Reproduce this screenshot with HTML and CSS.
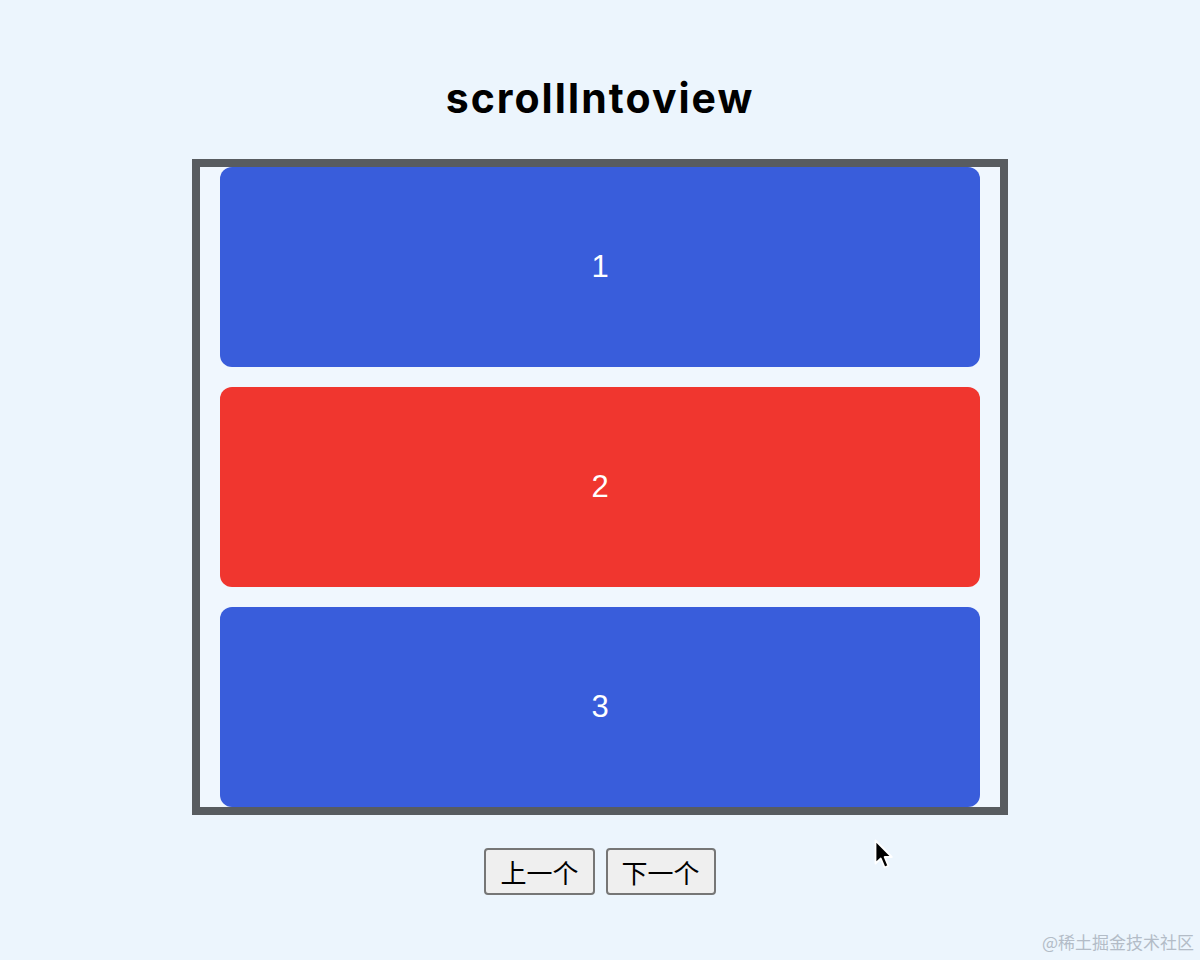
FILE: index.html
```html
<!DOCTYPE html>
<html>
  <head>
    <meta charset="utf-8" />
    <title>scrollIntoview</title>
    <link rel="stylesheet" href="styles.css">
  </head>
  <body>
    <h1 class="title">scrollIntoview</h1>
    <div class="viewport">
      <div class="list">
        <div class="item item--blue">1</div>
        <div class="item item--red">2</div>
        <div class="item item--blue">3</div>
      </div>
    </div>
    <div class="controls">
      <button class="btn">上一个</button>
      <button class="btn">下一个</button>
    </div>
    <svg class="cursor" width="24" height="32" viewBox="0 0 24 32">
      <path d="M1.5 1.5 L1.5 24.5 L6.8 19.5 L10.6 28.5 L14.4 26.8 L10.6 18 L17.8 18 Z"
        fill="#000" stroke="#fff" stroke-width="1.8" stroke-linejoin="round" />
    </svg>
    <div class="watermark">@稀土掘金技术社区</div>
  </body>
</html>
```

FILE: styles.css
```css
html,
body {
  margin: 0;
  padding: 0;
}
body {
  background: #ecf5fd;
  font-family: Inter, "Noto Sans CJK SC", sans-serif;
  padding-top: 74px;
}
.title {
  margin: 0 0 37px;
  font-size: 41px;
  line-height: 48px;
  font-weight: 700;
  letter-spacing: 2px;
  text-align: center;
  color: #000;
}
.viewport {
  width: 800px;
  height: 640px;
  margin: 0 auto;
  border: 8px solid #585c60;
  background: #f0f7fe;
  overflow: hidden;
}
.list {
  display: flex;
  flex-direction: column;
  gap: 20px;
  padding: 0 20px;
}
.item {
  height: 200px;
  flex-shrink: 0;
  border-radius: 12px;
  display: flex;
  align-items: center;
  justify-content: center;
  color: #fff;
  font-size: 31px;
  font-family: "Liberation Sans", sans-serif;
}
.item--blue {
  background: #395ddb;
}
.item--red {
  background: #f0362f;
}
.controls {
  display: flex;
  justify-content: center;
  gap: 11px;
  margin-top: 33px;
}
.btn {
  font-family: "Noto Sans CJK SC", sans-serif;
  font-size: 26px;
  line-height: 31px;
  padding: 6px 14px;
  background: #efefef;
  border: 2px solid #767676;
  border-radius: 4px;
  color: #000;
}
.cursor {
  position: absolute;
  left: 874px;
  top: 839px;
}
.watermark {
  position: absolute;
  right: 6px;
  bottom: 6px;
  font-family: "Noto Sans CJK SC", sans-serif;
  font-size: 17px;
  color: #b3bcc7;
}
```
